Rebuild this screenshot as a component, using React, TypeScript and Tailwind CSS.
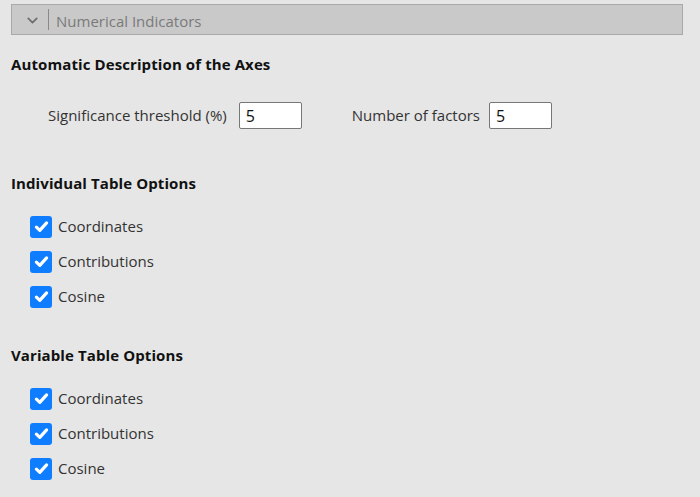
import { ChevronDown } from 'lucide-react'

const font = { fontFamily: '"Open Sans", "Noto Sans", sans-serif' }

function Check({ label }: { label: string }) {
  return (
    <label className="flex items-center h-[35px] pl-[19px]">
      <span className="flex items-center justify-center w-[22px] h-[22px] rounded-[3px] bg-[#0f7dff]">
        <svg viewBox="0 0 16 16" className="w-[17px] h-[17px]">
          <path d="M3.2 8.6 L6.4 11.6 L12.8 4.6" fill="none" stroke="white" strokeWidth="3" strokeLinecap="round" strokeLinejoin="round" />
        </svg>
      </span>
      <span className="ml-[6px] text-[15px] text-[#333]">{label}</span>
    </label>
  )
}

function Heading({ children, className }: { children: string; className: string }) {
  return <h2 className={`text-[15px] leading-[20px] font-bold text-[#111] tracking-[0.1px] ${className}`}>{children}</h2>
}

export default function App() {
  return (
    <div className="w-[700px] h-[497px] overflow-hidden bg-[#e6e6e6] pl-[11px] pr-[17px] pt-[4px]" style={font}>
      {/* Collapsible header */}
      <div className="flex items-center h-[31px] border border-[#a9a9a9] bg-[#c9c9c9]">
        <ChevronDown className="ml-[12px] mt-[2px] w-[17px] h-[17px] text-[#6e6e6e]" strokeWidth={2.4} />
        <span className="ml-[7px] w-px h-[21px] bg-[#8a8a8a]" />
        <span className="ml-[7px] pt-[3px] text-[15px] text-[#7a7a7a]">Numerical Indicators</span>
      </div>

      <Heading className="mt-[19px]">Automatic Description of the Axes</Heading>

      <div className="flex items-center mt-[28px] pl-[37px] text-[15px] text-[#333]">
        <span>Significance threshold (%)</span>
        <input
          defaultValue="5"
          className="ml-[12px] w-[63px] h-[27px] px-[6px] border border-[#777] rounded-[2px] bg-white text-[16px] text-[#111] outline-none"
        />
        <span className="ml-[50px]">Number of factors</span>
        <input
          defaultValue="5"
          className="ml-[9px] w-[63px] h-[27px] px-[6px] border border-[#777] rounded-[2px] bg-white text-[16px] text-[#111] outline-none"
        />
      </div>

      <Heading className="mt-[44px]">Individual Table Options</Heading>
      <div className="mt-[16px]">
        <Check label="Coordinates" />
        <Check label="Contributions" />
        <Check label="Cosine" />
      </div>

      <Heading className="mt-[31px]">Variable Table Options</Heading>
      <div className="mt-[16px]">
        <Check label="Coordinates" />
        <Check label="Contributions" />
        <Check label="Cosine" />
      </div>
    </div>
  )
}
